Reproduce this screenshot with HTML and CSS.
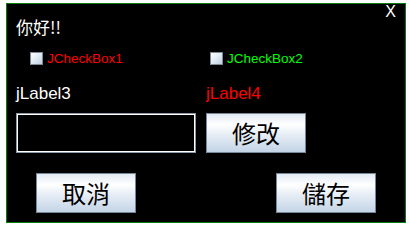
FILE: index.html
```html
<!DOCTYPE html>
<html>
<head>
<meta charset="utf-8">
<link rel="stylesheet" href="styles.css">
</head>
<body>
<div class="panel">
  <div class="header">
    <div class="greeting">你好!!</div>
    <div class="close">X</div>
  </div>
  <div class="row checks">
    <label class="check c1"><span class="box"></span><span class="red">JCheckBox1</span></label>
    <label class="check c2"><span class="box"></span><span class="green">JCheckBox2</span></label>
  </div>
  <div class="row labels">
    <div class="label white">jLabel3</div>
    <div class="label red">jLabel4</div>
  </div>
  <div class="row fields">
    <div class="field"></div>
    <button class="btn">修改</button>
  </div>
  <div class="row bottom">
    <button class="btn cancel">取消</button>
    <button class="btn save">儲存</button>
  </div>
</div>
</body>
</html>
```
FILE: styles.css
```css
html, body {
  margin: 0;
  padding: 0;
  background: #ffffff;
  width: 410px;
  height: 229px;
  overflow: hidden;
  font-family: "Liberation Sans", "Noto Sans CJK TC", sans-serif;
}

.panel {
  box-sizing: border-box;
  margin: 3px 0 0 6px;
  width: 400px;
  height: 220px;
  border: 1px solid #0a7a0a;
  background: #000000;
  padding: 0 9px 0 9px;
}

.header {
  display: flex;
  justify-content: space-between;
  align-items: flex-start;
  height: 31px;
}

.greeting {
  margin-top: 15px;
  font-family: "Noto Sans CJK TC", sans-serif;
  font-size: 17px;
  line-height: 16px;
  color: #ffffff;
}

.close {
  font-family: "Liberation Sans", sans-serif;
  font-size: 16px;
  line-height: 16px;
  color: #ffffff;
  margin-right: 0;
}

.row {
  display: grid;
  grid-template-columns: 190px 1fr;
}

.checks {
  margin-top: 17px;
  height: 13px;
}

.check {
  display: flex;
  align-items: center;
  font-size: 13.5px;
  line-height: 13px;
}

.c1 { margin-left: 14px; }
.c2 { margin-left: 4px; }

.box {
  box-sizing: border-box;
  width: 13px;
  height: 13px;
  border: 1px solid #7d8b99;
  background: linear-gradient(135deg, #ffffff 0%, #e4ecf4 45%, #bfcfe0 100%);
  margin-right: 4px;
}

.red { color: #ff0000; }
.green { color: #00ff00; }
.white { color: #ffffff; }

.labels {
  margin-top: 20px;
  height: 17px;
}

.label {
  font-size: 17px;
  line-height: 17px;
}

.fields {
  margin-top: 11px;
  height: 40px;
}

.field {
  box-sizing: border-box;
  width: 180px;
  height: 40px;
  border: 1px solid #8c9aa8;
  box-shadow: inset 0 0 0 1px #ffffff;
  background: #000000;
}

.btn {
  box-sizing: border-box;
  width: 100px;
  height: 40px;
  margin: 0;
  padding: 0;
  border: 1px solid #75889a;
  background: linear-gradient(#e2eaf3 0%, #ffffff 28%, #e6edf5 55%, #c3d4e6 100%);
  font-family: "Noto Sans CJK TC", sans-serif;
  font-size: 24px;
  line-height: 38px;
  color: #000000;
  text-align: center;
}

.bottom {
  margin-top: 20px;
  height: 40px;
}

.cancel { margin-left: 20px; }
.save { margin-left: 70px; }
```
